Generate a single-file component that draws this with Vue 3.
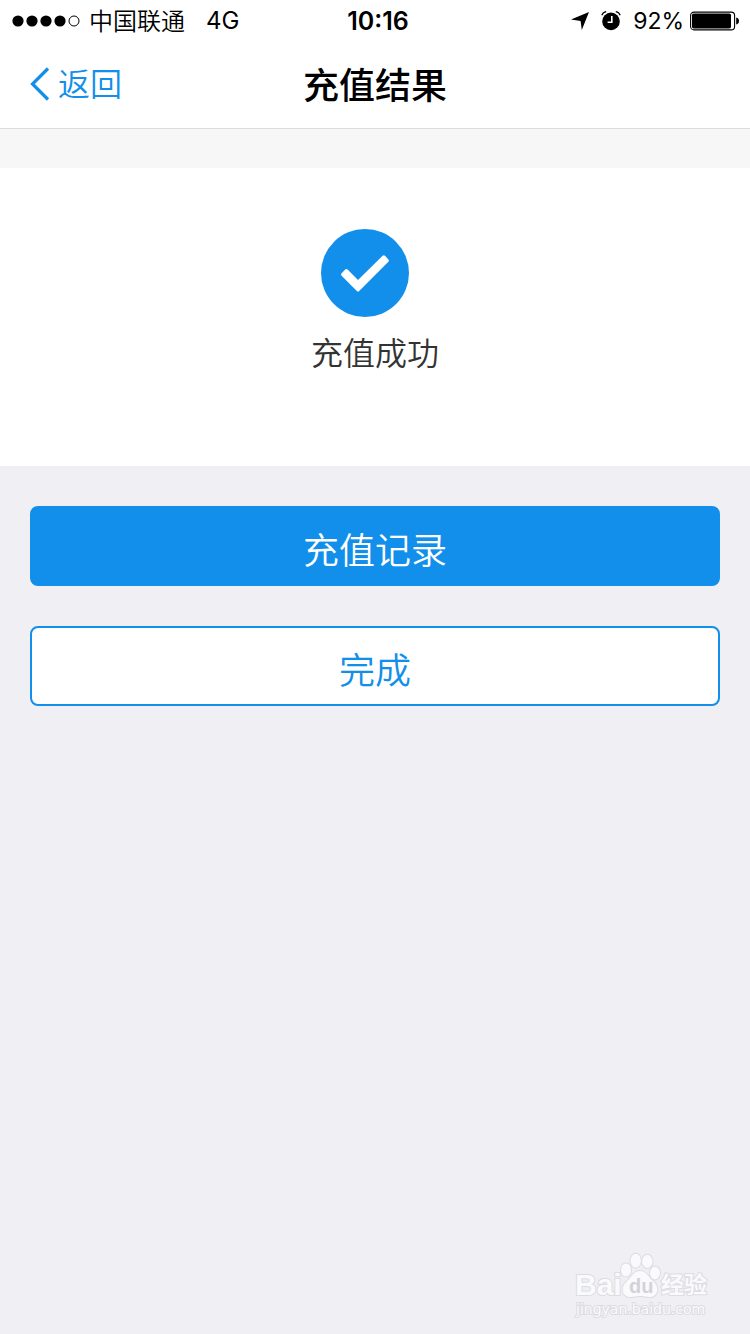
<template>
  <div class="page">
    <!-- Status bar -->
    <div class="status-bar">
      <div class="status-left">
        <svg class="signal" viewBox="0 0 68 12" aria-hidden="true">
          <circle v-for="n in 4" :key="n" :cx="n * 14 - 8" cy="6" r="5.6" />
          <circle cx="62" cy="6" r="5" fill="none" stroke="#000" stroke-width="1" />
        </svg>
        <span class="carrier">{{ status.carrier }}</span>
        <span class="network">{{ status.network }}</span>
      </div>
      <div class="clock">{{ status.time }}</div>
      <div class="status-right">
        <svg class="location" viewBox="0 0 18 18" aria-hidden="true">
          <path d="M18 0L10.8 18L9.6 9L0 7.6Z" />
        </svg>
        <svg class="alarm" viewBox="0 0 20 20" aria-hidden="true">
          <circle cx="10" cy="10.4" r="8.8" />
          <path d="M0.8 4.2Q2 1.2 5.2 0.6M14.8 0.6Q18 1.2 19.2 4.2" fill="none" stroke="#000" stroke-width="1.2" />
          <path d="M10.8 5V11.2H6.6" fill="none" stroke="#fff" stroke-width="1.6" />
        </svg>
        <span class="percent">{{ status.battery }}%</span>
        <svg class="battery" viewBox="0 0 50 20" aria-hidden="true">
          <rect x="0.6" y="1.1" width="44" height="17.8" rx="3.4" fill="none" stroke="#000" stroke-width="1.1" />
          <rect x="2" y="2.6" width="39" height="14.8" rx="1.6" />
          <path d="M46.2 6.6Q49 7.2 49 10T46.2 13.4Z" />
        </svg>
      </div>
    </div>

    <!-- Navigation -->
    <header class="nav">
      <a class="back" href="#">
        <svg class="chevron" viewBox="0 0 20 34" aria-hidden="true">
          <path d="M18 1.5L2.5 17L18 32.5" fill="none" stroke="currentColor" stroke-width="3.2" />
        </svg>
        <span>返回</span>
      </a>
      <h1>充值结果</h1>
    </header>
    <div class="strip"></div>

    <!-- Result -->
    <section class="result">
      <svg class="success" viewBox="0 0 88 88" aria-hidden="true">
        <circle cx="44" cy="44" r="44" />
        <path
          d="M20.6 44.2L24.2 40.6Q25.4 39.4 26.6 40.6L37 51L61.6 26.8Q62.8 25.6 64 26.8L67.4 30.4Q68.6 31.6 67.4 32.8L38.2 62Q37 63.2 35.8 62L20.6 46.8Q19.4 45.5 20.6 44.2Z"
          fill="#fff"
        />
      </svg>
      <p>充值成功</p>
    </section>

    <div class="actions">
      <button
        v-for="action in actions"
        :key="action.label"
        type="button"
        :class="['btn', action.type]"
      >
        {{ action.label }}
      </button>
    </div>

    <!-- Watermark -->
    <svg class="watermark" viewBox="0 0 140 68" aria-label="Baidu">
      <g class="mark">
        <text class="brand" x="1" y="43">Bai</text>
        <ellipse cx="52" cy="18" rx="5" ry="6.6" />
        <ellipse cx="61.7" cy="8.7" rx="5.2" ry="7" />
        <ellipse cx="73.3" cy="9.4" rx="5.2" ry="6.6" />
        <ellipse cx="81" cy="21" rx="5" ry="6.4" />
        <path d="M66 19C73 19 74 25 79 29C86 35 84 45 76 45C71 45 70 44 66 44C62 44 61 45 56 45C48 45 46 35 53 29C58 25 59 19 66 19Z" />
        <text class="cn" x="87" y="41">经验</text>
        <text class="site" x="2" y="62">jingyan.baidu.com</text>
      </g>
      <text class="du" x="55" y="41">du</text>
    </svg>
  </div>
</template>

<script setup>
import { ref } from 'vue';

const status = ref({
  carrier: '中国联通',
  network: '4G',
  time: '10:16',
  battery: 92
});

const actions = ref([
  { label: '充值记录', type: 'primary' },
  { label: '完成', type: 'plain' }
]);
</script>

<style>
body {
  background-color: #efeff4;
}
</style>

<style scoped>
.page {
  position: relative;
  min-height: 100vh;
  background-color: #efeff4;
  font-family: Inter, "Noto Sans CJK SC", sans-serif;
  font-weight: 350;
  color: #000;
}

/* Status bar */
.status-bar {
  display: grid;
  grid-template-columns: 1fr auto 1fr;
  align-items: center;
  height: 40px;
  padding: 1px 10px 0 12px;
  box-sizing: border-box;
  background-color: #fff;
  font-size: 24px;
  line-height: 36px;
}

.status-left,
.status-right {
  display: flex;
  align-items: center;
}

.status-right {
  justify-content: flex-end;
}

.signal {
  width: 68px;
  height: 12px;
}

.carrier {
  padding-top: 2px;
  margin: 0 21px 0 9px;
}

.network,
.percent {
  font-weight: 400;
}

.clock {
  padding-left: 4px;
  font-size: 25px;
  font-weight: 600;
}

.location {
  width: 18px;
  height: 18px;
}

.alarm {
  width: 20px;
  height: 20px;
  margin: 0 12px;
}

.percent {
  font-size: 23px;
}

.battery {
  width: 50px;
  height: 20px;
  margin-left: 6px;
}

/* Navigation */
.nav {
  display: grid;
  grid-template-columns: 1fr auto 1fr;
  align-items: center;
  height: 88px;
  padding: 0 30px;
  border-bottom: 1px solid #dcdcdc;
  background-color: #fff;
}

.back {
  display: flex;
  align-items: center;
  gap: 8px;
  color: #128eeb;
  font-size: 32px;
  line-height: 48px;
  text-decoration: none;
}

.back span {
  padding-top: 2px;
}

.chevron {
  width: 20px;
  height: 34px;
}

.nav h1 {
  margin: 0;
  padding-bottom: 2px;
  font-size: 36px;
  font-weight: 500;
}

.strip {
  height: 39px;
  background-color: #f7f7f7;
}

/* Result */
.result {
  display: flex;
  flex-direction: column;
  align-items: center;
  padding: 61px 0 88px;
  background-color: #fff;
}

.success {
  width: 88px;
  height: 88px;
  margin-right: 20px;
  fill: #128eeb;
}

.result p {
  margin: 13px 0 0;
  color: #333;
  font-size: 32px;
  line-height: 48px;
}

/* Buttons */
.actions {
  display: flex;
  flex-direction: column;
  gap: 40px;
  padding: 40px 30px;
}

.btn {
  height: 80px;
  padding: 4px 0 0;
  border: 2px solid #128eeb;
  border-radius: 8px;
  font-family: inherit;
  font-size: 36px;
  font-weight: 350;
  cursor: pointer;
}

.primary {
  background-color: #128eeb;
  color: #fff;
}

.plain {
  background-color: #fff;
  color: #128eeb;
}

/* Watermark */
.watermark {
  position: absolute;
  right: 36px;
  bottom: 14px;
  width: 140px;
  height: 68px;
}

.mark {
  fill: #fafafc;
  stroke: #dcdce1;
  stroke-width: 2px;
  paint-order: stroke;
}

.brand {
  font: 700 30px "Liberation Sans", sans-serif;
}

.cn {
  font: 700 23px "Noto Sans CJK SC", sans-serif;
}

.site {
  font: 400 14px "DejaVu Sans", sans-serif;
}

.du {
  fill: #d2d2d8;
  font: 700 20px "Liberation Sans", sans-serif;
}
</style>
